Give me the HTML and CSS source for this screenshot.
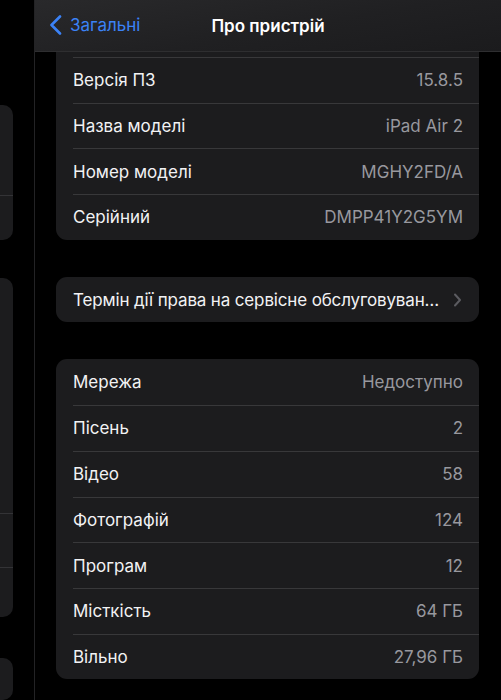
FILE: index.html
```html
<!DOCTYPE html>
<html>

<head>
    <meta name="viewport" content="width=device-width, initial-scale=1">
    <link rel="stylesheet" href="styles.css">
</head>

<body>

    <div class="sidebar">
        <div class="side-card first">
            <div class="side-row tall"></div>
            <div class="side-row"></div>
        </div>
        <div class="side-card second">
            <div class="side-row big"></div>
            <div class="side-row mid"></div>
            <div class="side-row"></div>
        </div>
        <div class="side-card third"></div>
    </div>

    <div class="main">
        <div class="header">
            <div class="back">
                <svg width="13" height="20" viewBox="0 0 13 20">
                    <path d="M11 1.5 L2.5 10 L11 18.5" fill="none" stroke="#3b82f6" stroke-width="2.6" stroke-linecap="round" stroke-linejoin="round" />
                </svg>
                <span>Загальні</span>
            </div>
            <div class="title">Про пристрій</div>
        </div>

        <div class="content">
            <div class="card top-card">
                <div class="row"><span class="label">Версія ПЗ</span><span class="value">15.8.5</span></div>
                <div class="row"><span class="label">Назва моделі</span><span class="value">iPad Air 2</span></div>
                <div class="row"><span class="label">Номер моделі</span><span class="value">MGHY2FD/A</span></div>
                <div class="row"><span class="label">Серійний</span><span class="value">DMPP41Y2G5YM</span></div>
            </div>

            <div class="card">
                <div class="row link">
                    <span class="label">Термін дії права на сервісне обслуговуван…</span>
                    <svg width="9" height="14" viewBox="0 0 9 14">
                        <path d="M2 1.5 L7 7 L2 12.5" fill="none" stroke="#5b5b60" stroke-width="2" stroke-linecap="round" stroke-linejoin="round" />
                    </svg>
                </div>
            </div>

            <div class="card">
                <div class="row"><span class="label">Мережа</span><span class="value">Недоступно</span></div>
                <div class="row"><span class="label">Пісень</span><span class="value">2</span></div>
                <div class="row"><span class="label">Відео</span><span class="value">58</span></div>
                <div class="row"><span class="label">Фотографій</span><span class="value">124</span></div>
                <div class="row"><span class="label">Програм</span><span class="value">12</span></div>
                <div class="row"><span class="label">Місткість</span><span class="value">64 ГБ</span></div>
                <div class="row"><span class="label">Вільно</span><span class="value">27,96 ГБ</span></div>
            </div>
        </div>
    </div>

</body>

</html>
```

FILE: styles.css
```css
html,
body {
    margin: 0;
    padding: 0;
    width: 501px;
    height: 700px;
    overflow: hidden;
    background: #000;
    font-family: Inter, "Noto Sans", sans-serif;
    font-size: 17px;
}

body {
    display: flex;
}

/* left list, mostly cut off */
.sidebar {
    width: 34px;
    flex-shrink: 0;
    border-right: 1px solid #232325;
    padding-top: 105px;
    display: flex;
    flex-direction: column;
    gap: 38px;
}

.side-card {
    width: 13px;
    background: #1c1c1e;
    border-radius: 0 10px 10px 0;
}

.side-row {
    height: 49px;
    border-top: 1px solid #333336;
}

.side-row:first-child {
    border-top: none;
}

.side-card.first .side-row {
    height: 44px;
}

.side-card.first .side-row.tall {
    height: 90px;
}

.side-row.big {
    height: 235px;
}

.side-row.mid {
    height: 53px;
}

.side-card.third {
    height: 60px;
    margin-top: 3px;
}

.main {
    flex: 1;
    display: flex;
    flex-direction: column;
}

.header {
    height: 51px;
    border-bottom: 1px solid #2e2e30;
    background: linear-gradient(170deg, #29292b 0%, #202022 55%, #1b1b1d 100%);
    display: flex;
    align-items: center;
    justify-content: center;
    position: relative;
}

.back {
    position: absolute;
    left: 14px;
    top: 15px;
    display: flex;
    align-items: center;
    gap: 8px;
    color: #3b82f6;
}

.title {
    color: #fff;
    font-weight: 600;
    font-size: 17px;
}

.content {
    padding: 0 22px 0 21px;
    display: flex;
    flex-direction: column;
    gap: 37px;
}

.card {
    background: #1c1c1e;
    border-radius: 11px;
    padding-left: 17px;
}

.top-card {
    border-radius: 0 0 11px 11px;
    padding-top: 5px;
}

.row {
    height: 44.7px;
    border-top: 1px solid #38383a;
    display: flex;
    align-items: center;
    justify-content: space-between;
    padding-right: 16px;
}

.card:not(.top-card) .row:first-child {
    border-top: none;
    height: 45.7px;
}

.card .row.link {
    height: 46px;
    padding-right: 17px;
}

.link .label {
    letter-spacing: -0.15px;
}

.label {
    color: #f2f2f4;
}

.value {
    color: #98989e;
}
```
